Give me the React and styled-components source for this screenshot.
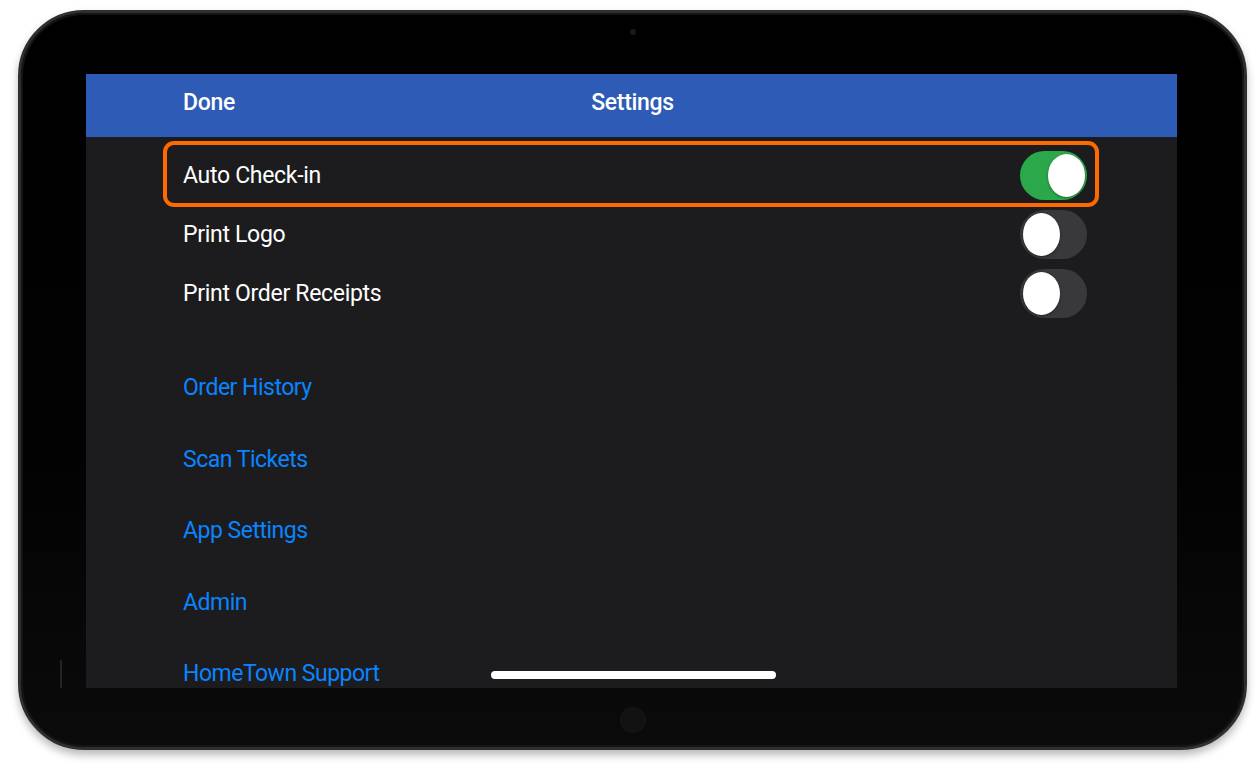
import React from "react";
import styled, { createGlobalStyle } from "styled-components";

const GlobalStyle = createGlobalStyle`
  html, body { margin: 0; padding: 0; background: #ffffff; }
  body { font-family: Roboto, "Liberation Sans", Arial, sans-serif; }
  * { box-sizing: border-box; }
`;

const Stage = styled.div`
  width: 1257px;
  height: 776px;
  padding: 10px 10px 0 18px;
  background: #ffffff;
  overflow: hidden;
`;

const Device = styled.div`
  position: relative;
  width: 1229px;
  height: 740px;
  border-radius: 66px;
  border: 3px solid #2f2f2f;
  background: linear-gradient(#000000 0%, #020202 60%, #0b0b0b 100%);
  box-shadow: inset 0 0 0 2px #141414, 0 5px 8px rgba(0, 0, 0, 0.28);
  display: flex;
  flex-direction: column;
  padding: 0 67px 0 65px;

  &::after {
    content: "";
    position: absolute;
    left: 39px;
    top: 647px;
    width: 2px;
    height: 28px;
    border-radius: 1px;
    background: #242424;
  }
`;

const TopBezel = styled.div`
  height: 61px;
  display: flex;
  justify-content: center;
  padding-top: 16px;
  padding-left: 2px;
`;

const Camera = styled.div`
  width: 6px;
  height: 6px;
  border-radius: 50%;
  background: #1a1a1a;
`;

const BottomBezel = styled.div`
  height: 59px;
  display: flex;
  justify-content: center;
  align-items: center;
  padding-top: 4px;
  padding-left: 2px;
`;

const HomeButton = styled.div`
  width: 26px;
  height: 26px;
  border-radius: 50%;
  background: #121212;
  box-shadow: inset 0 0 0 1px #151515;
`;

const Screen = styled.div`
  position: relative;
  height: 614px;
  background: #1c1c1e;
  overflow: hidden;
  display: flex;
  flex-direction: column;
  letter-spacing: -0.3px;
`;

const Header = styled.div`
  height: 63px;
  flex-shrink: 0;
  background: #2d5bb6;
  display: grid;
  grid-template-columns: 1fr auto 1fr;
  align-items: center;
  padding-bottom: 6px;
  color: #ffffff;
  font-size: 23px;
  font-weight: 500;
`;

const HeaderButton = styled.span`
  padding-left: 97px;
`;

const HeaderTitle = styled.span`
  padding-left: 2px;
`;

const ToggleList = styled.div`
  padding-top: 8px;
  display: flex;
  flex-direction: column;
`;

const Row = styled.div`
  position: relative;
  height: 59px;
  margin: 0 78px 0 77px;
  padding: 1px 12px 0 20px;
  display: flex;
  align-items: center;
  justify-content: space-between;

  &::before {
    content: "";
    display: ${(p) => (p.$highlighted ? "block" : "none")};
    position: absolute;
    inset: -4px 0 -3px 0;
    border: 4px solid #ff6a00;
    border-radius: 11px;
    pointer-events: none;
  }
`;

const Label = styled.span`
  color: #ffffff;
  font-size: 23px;
  font-weight: 400;
`;

const Track = styled.div`
  position: relative;
  width: 67px;
  height: 49px;
  border-radius: 25px;
  background: ${(p) => (p.$on ? "#2ba84a" : "#39393d")};
  display: flex;
  align-items: center;
  justify-content: ${(p) => (p.$on ? "flex-end" : "flex-start")};
  padding: 0 2px 0 3px;
`;

const Thumb = styled.div`
  width: 37px;
  height: 43px;
  border-radius: 50%;
  background: #ffffff;
  box-shadow: 0 1px 3px rgba(0, 0, 0, 0.35);
`;

const LinkList = styled.div`
  margin-top: 30px;
  display: flex;
  flex-direction: column;
`;

const LinkItem = styled.div`
  height: 71.5px;
  flex-shrink: 0;
  display: flex;
  align-items: center;
  padding-left: 97px;
  color: #0a84ff;
  font-size: 23px;
  font-weight: 400;
  letter-spacing: -0.5px;
`;

const HomeIndicator = styled.div`
  position: absolute;
  left: 405px;
  bottom: 9px;
  width: 285px;
  height: 8px;
  border-radius: 4px;
  background: #ffffff;
`;

const toggles = [
  { label: "Auto Check-in", on: true, highlighted: true },
  { label: "Print Logo", on: false },
  { label: "Print Order Receipts", on: false },
];

const links = ["Order History", "Scan Tickets", "App Settings", "Admin", "HomeTown Support"];

function Toggle({ on }) {
  return (
    <Track $on={on}>
      <Thumb />
    </Track>
  );
}

export default function App() {
  return (
    <>
      <GlobalStyle />
      <Stage>
        <Device>
          <TopBezel>
            <Camera />
          </TopBezel>
          <Screen>
            <Header>
              <HeaderButton>Done</HeaderButton>
              <HeaderTitle>Settings</HeaderTitle>
              <span />
            </Header>
            <ToggleList>
              {toggles.map((t) => (
                <Row key={t.label} $highlighted={t.highlighted}>
                  <Label>{t.label}</Label>
                  <Toggle on={t.on} />
                </Row>
              ))}
            </ToggleList>
            <LinkList>
              {links.map((l) => (
                <LinkItem key={l}>{l}</LinkItem>
              ))}
            </LinkList>
            <HomeIndicator />
          </Screen>
          <BottomBezel>
            <HomeButton />
          </BottomBezel>
        </Device>
      </Stage>
    </>
  );
}
